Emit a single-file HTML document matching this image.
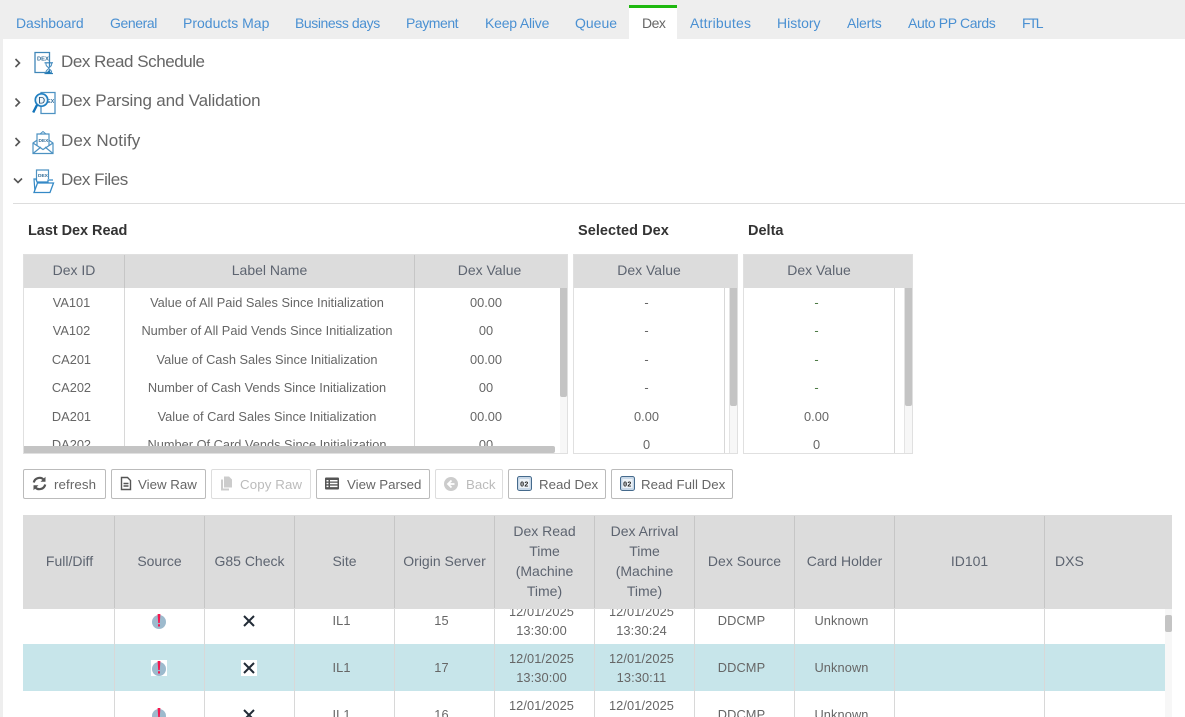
<!DOCTYPE html>
<html><head><meta charset="utf-8"><title>Dex</title>
<style>
html,body{margin:0;padding:0;background:#fff}
body{width:1185px;height:717px;position:relative;overflow:hidden;font-family:"Liberation Sans",sans-serif;color:#666}
.a{position:absolute}
.t{position:absolute;white-space:nowrap}
.tab{position:absolute;top:14px;line-height:18px;font-size:14px;color:#4a90d2;white-space:nowrap}
.sec{position:absolute;left:61px;font-size:17px;line-height:22px;color:#666;white-space:nowrap}
.h3{position:absolute;top:222px;font-size:14.5px;line-height:18px;font-weight:bold;color:#333;white-space:nowrap}
.hd{position:absolute;text-align:center;font-size:14px;line-height:20px;color:#5d6470}
.c{position:absolute;text-align:center;font-size:12.8px;line-height:16px;color:#666;white-space:nowrap}
.v{position:absolute;background:#d8d8d8;width:1px}
.vh{position:absolute;background:#c6c6c6;width:1px}
.btn{position:absolute;top:469px;height:28px;border:1px solid #bbb;border-radius:2px;background:#fff;font-size:13.3px;line-height:30px;color:#666;white-space:nowrap;box-sizing:content-box}
.btn.dis{border-color:#ddd;color:#bbb}
.btn span{position:absolute;top:0}
.btn svg{position:absolute}
.m{position:absolute;text-align:center;font-size:12.8px;line-height:19px;color:#666;white-space:nowrap;letter-spacing:.1px}
</style></head><body>

<!-- chrome -->
<div class="a" style="left:0;top:0;width:1185px;height:39px;background:#eee"></div>
<div class="a" style="left:0;top:39px;width:3px;height:678px;background:#eee"></div>
<div class="a" style="left:629px;top:5px;width:48px;height:34px;background:#fff"></div>
<div class="a" style="left:629px;top:5px;width:48px;height:3px;background:#1eb80f"></div>

<div class="tab" style="left:16px;letter-spacing:-.1px">Dashboard</div>
<div class="tab" style="left:110px;letter-spacing:-.4px">General</div>
<div class="tab" style="left:183px">Products Map</div>
<div class="tab" style="left:295px;letter-spacing:-.42px">Business days</div>
<div class="tab" style="left:406px;letter-spacing:-.45px">Payment</div>
<div class="tab" style="left:485px;letter-spacing:-.2px">Keep Alive</div>
<div class="tab" style="left:575px">Queue</div>
<div class="tab" style="left:642px;color:#666;letter-spacing:-.5px">Dex</div>
<div class="tab" style="left:690px;letter-spacing:.2px">Attributes</div>
<div class="tab" style="left:777px">History</div>
<div class="tab" style="left:847px;letter-spacing:-.2px">Alerts</div>
<div class="tab" style="left:908px;letter-spacing:-.38px">Auto PP Cards</div>
<div class="tab" style="left:1022px;letter-spacing:-1.7px">FTL</div>

<!-- accordion -->
<svg class="a" style="left:0;top:40px" width="60" height="165" viewBox="0 40 60 165" fill="none">
<g stroke="#555" stroke-width="1.6">
<path d="M15.5 59l4 4-4 4"/>
<path d="M15.5 98.500l4 4-4 4"/>
<path d="M15.500 138l4 4-4 4"/>
<path d="M14 178.500l4 4 4-4"/>
</g>
<!-- schedule -->
<path d="M35 52.500h14.500v20H35z" stroke="#3f86b8" stroke-width="1.300" fill="#fff"/>
<text x="37" y="60.500" font-family="Liberation Sans" font-size="5.800" font-weight="bold" fill="#2f6a96">DEX</text>
<path d="M44.500 62.800h8.500M44.500 73.600h8.500" stroke="#2f7fb8" stroke-width="1.100"/>
<path d="M46 63v1.500c0 2 2.800 2.800 2.800 3.700s-2.800 1.800-2.800 3.800v1.500M51.600 63v1.500c0 2-2.800 2.800-2.800 3.700s2.800 1.800 2.800 3.800v1.500" stroke="#4a8fc0" fill="#fff"/>
<path d="M45.500 73.800l3.300-3.600 3.300 3.600z" fill="#1f78b4"/>
<!-- parsing -->
<path d="M41 92.500h14v21H41z" stroke="#4d92c2" stroke-width="1.300" fill="#fff"/>
<text x="47" y="103" font-family="Liberation Sans" font-size="5.500" font-weight="bold" fill="#356f9c">EX</text>
<circle cx="41.500" cy="100" r="6.200" stroke="#1f7fc2" stroke-width="1.700" fill="#eef6fb"/>
<text x="38.200" y="103.500" font-family="Liberation Sans" font-size="9.500" fill="#1f4f78">D</text>
<path d="M37 105l-3.800 7.500" stroke="#1273b9" stroke-width="2.400"/>
<!-- notify -->
<path d="M33 143l10-7 10 7v10.500H33z" stroke="#4d92c2" stroke-width="1.200" fill="#fff"/>
<path d="M37 146v-12h12v12" stroke="#4d92c2" stroke-width="1.200" fill="#fff"/>
<path d="M40 134l3-2.500 3 2.500" stroke="#4d92c2"/>
<text x="38.500" y="142" font-family="Liberation Sans" font-size="4.800" font-weight="bold" fill="#2f6a96">DEX</text>
<path d="M33 143l10 6.500 10-6.500M33 153.500l8-6.500M53 153.500l-8-6.500" stroke="#4d92c2" stroke-width="1.200"/>
<!-- files -->
<path d="M36.500 181v-11h12v9" stroke="#4d92c2" stroke-width="1.200"/>
<text x="38" y="177" font-family="Liberation Sans" font-size="4.800" font-weight="bold" fill="#2f6a96">DEX</text>
<path d="M35 192l-1-13h2l1 3h11v-2h5" stroke="#3489c6" stroke-width="1.200"/>
<path d="M34 192.500l3.500-9.500h16l-3.500 9.500z" stroke="#3489c6" stroke-width="1.300" fill="#fff"/>
</svg>
<div class="sec" style="top:51px;letter-spacing:-.45px">Dex Read Schedule</div>
<div class="sec" style="top:90px;letter-spacing:-.17px">Dex Parsing and Validation</div>
<div class="sec" style="top:130px;letter-spacing:.1px">Dex Notify</div>
<div class="sec" style="top:169px;letter-spacing:-.45px">Dex Files</div>
<div class="a" style="left:13px;top:203px;width:1172px;height:1px;background:#ddd"></div>

<div class="h3" style="left:28px;letter-spacing:-.05px">Last Dex Read</div>
<div class="h3" style="left:578px;letter-spacing:.05px">Selected Dex</div>
<div class="h3" style="left:748px">Delta</div>

<!-- Table 1 -->
<div class="a" style="left:23px;top:254px;width:543px;height:198px;border:1px solid #e0e0e0;overflow:hidden">
  <div class="a" style="left:0;top:0;width:544px;height:33px;background:#dcdcdc"></div>
  <div class="vh" style="left:100px;top:0;height:33px"></div>
  <div class="vh" style="left:390px;top:0;height:33px"></div>
  <div class="v" style="left:100px;top:33px;height:166px"></div>
  <div class="v" style="left:390px;top:33px;height:166px"></div>
  <div class="hd" style="left:0;top:5px;width:100px">Dex ID</div>
  <div class="hd" style="left:101px;top:5px;width:289px">Label Name</div>
  <div class="hd" style="left:391px;top:5px;width:149px">Dex Value</div>
  <div class="a" style="left:536px;top:33px;width:8px;height:166px;background:#f7f7f7"></div>
  <div class="a" style="left:536px;top:33px;width:7px;height:109px;background:#c4c4c4;border-radius:0 0 2px 2px"></div>

  <div class="c" style="left:0;top:40px;width:95px">VA101</div><div class="c" style="left:101px;top:40px;width:284px">Value of All Paid Sales Since Initialization</div><div class="c" style="left:391px;top:40px;width:142px">00.00</div>
  <div class="c" style="left:0;top:68px;width:95px">VA102</div><div class="c" style="left:101px;top:68px;width:284px">Number of All Paid Vends Since Initialization</div><div class="c" style="left:391px;top:68px;width:142px">00</div>
  <div class="c" style="left:0;top:97px;width:95px">CA201</div><div class="c" style="left:101px;top:97px;width:284px">Value of Cash Sales Since Initialization</div><div class="c" style="left:391px;top:97px;width:142px">00.00</div>
  <div class="c" style="left:0;top:125px;width:95px">CA202</div><div class="c" style="left:101px;top:125px;width:284px">Number of Cash Vends Since Initialization</div><div class="c" style="left:391px;top:125px;width:142px">00</div>
  <div class="c" style="left:0;top:154px;width:95px">DA201</div><div class="c" style="left:101px;top:154px;width:284px">Value of Card Sales Since Initialization</div><div class="c" style="left:391px;top:154px;width:142px">00.00</div>
  <div class="c" style="left:0;top:182px;width:95px">DA202</div><div class="c" style="left:101px;top:182px;width:284px">Number Of Card Vends Since Initialization</div><div class="c" style="left:391px;top:182px;width:142px">00</div>

  <div class="a" style="left:0;top:191px;width:536px;height:8px;background:#fff"></div>
  <div class="a" style="left:0;top:191px;width:531px;height:7px;background:#c4c4c4;border-radius:0 2px 2px 0"></div>
</div>

<!-- Table 2 -->
<div class="a" style="left:573px;top:254px;width:163px;height:198px;border:1px solid #e0e0e0;overflow:hidden">
  <div class="a" style="left:0;top:0;width:164px;height:33px;background:#dcdcdc"></div>
  <div class="hd" style="left:0;top:5px;width:150px">Dex Value</div>
  <div class="v" style="left:150px;top:33px;height:166px"></div>
  <div class="a" style="left:155px;top:33px;width:1px;height:166px;background:#e4e4e4"></div>
  <div class="a" style="left:156px;top:33px;width:8px;height:166px;background:#f7f7f7"></div>
  <div class="a" style="left:156px;top:33px;width:7px;height:118px;background:#c4c4c4;border-radius:0 0 2px 2px"></div>
  <div class="c" style="left:0;top:40px;width:145px">-</div>
  <div class="c" style="left:0;top:68px;width:145px">-</div>
  <div class="c" style="left:0;top:97px;width:145px">-</div>
  <div class="c" style="left:0;top:125px;width:145px">-</div>
  <div class="c" style="left:0;top:154px;width:145px">0.00</div>
  <div class="c" style="left:0;top:182px;width:145px">0</div>
</div>

<!-- Table 3 -->
<div class="a" style="left:743px;top:254px;width:168px;height:198px;border:1px solid #e0e0e0;overflow:hidden">
  <div class="a" style="left:0;top:0;width:169px;height:33px;background:#dcdcdc"></div>
  <div class="hd" style="left:0;top:5px;width:150px">Dex Value</div>
  <div class="v" style="left:150px;top:33px;height:166px"></div>
  <div class="a" style="left:160px;top:33px;width:1px;height:166px;background:#e4e4e4"></div>
  <div class="a" style="left:161px;top:33px;width:8px;height:166px;background:#f7f7f7"></div>
  <div class="a" style="left:161px;top:33px;width:7px;height:118px;background:#c4c4c4;border-radius:0 0 2px 2px"></div>
  <div class="c" style="left:0;top:40px;width:145px;color:#4d7a45">-</div>
  <div class="c" style="left:0;top:68px;width:145px;color:#4d7a45">-</div>
  <div class="c" style="left:0;top:97px;width:145px;color:#4d7a45">-</div>
  <div class="c" style="left:0;top:125px;width:145px;color:#4d7a45">-</div>
  <div class="c" style="left:0;top:154px;width:145px">0.00</div>
  <div class="c" style="left:0;top:182px;width:145px">0</div>
</div>

<!-- Buttons -->
<div class="btn" style="left:23px;width:81px">
  <svg style="left:8px;top:6px" width="15" height="15" viewBox="0 0 15 15" fill="none" stroke="#555" stroke-width="2.200"><path d="M1.800 6.500A5.800 5.800 0 0 1 12 4M13.200 8.500A5.800 5.800 0 0 1 3 11"/><path d="M13.500 .8v5h-5z" fill="#555" stroke="none"/><path d="M1.500 14.200v-5h5z" fill="#555" stroke="none"/></svg>
  <span style="left:30px;letter-spacing:.1px">refresh</span></div>
<div class="btn" style="left:111px;width:93px">
  <svg style="left:8px;top:6px" width="12" height="15" viewBox="0 0 12 14" fill="none" stroke="#555" stroke-width="1.400"><path d="M1.500 1h6l3 3v9h-9zM3.500 7h5M3.500 9.500h5"/></svg>
  <span style="left:26px">View Raw</span></div>
<div class="btn dis" style="left:211px;width:98px">
  <svg style="left:8px;top:6px" width="13" height="15" viewBox="0 0 13 14" fill="#ccc"><path d="M4 0h5l3 3v8H4z"/><path d="M1 3h2v9h6v2H1z"/></svg>
  <span style="left:28px;letter-spacing:.1px">Copy Raw</span></div>
<div class="btn" style="left:316px;width:112px">
  <svg style="left:8px;top:7px" width="14" height="13" viewBox="0 0 14 13"><path d="M0 1.500A1 1 0 0 1 1 .5h12a1 1 0 0 1 1 1v10a1 1 0 0 1-1 1H1a1 1 0 0 1-1-1z" fill="#555"/><path d="M1.500 3h2v1.500h-2zM5 3h7.500v1.500H5zM1.500 5.800h2v1.500h-2zM5 5.800h7.500v1.500H5zM1.500 8.600h2v1.500h-2zM5 8.600h7.500v1.500H5z" fill="#fff"/></svg>
  <span style="left:30px">View Parsed</span></div>
<div class="btn dis" style="left:435px;width:66px">
  <svg style="left:8px;top:7px" width="14" height="14" viewBox="0 0 14 14"><circle cx="7" cy="7" r="7" fill="#ccc"/><path d="M7.500 3.500L4 7l3.500 3.500M4.500 7h6" stroke="#fff" stroke-width="1.800" fill="none"/></svg>
  <span style="left:30px">Back</span></div>
<div class="btn" style="left:508px;width:96px">
  <svg style="left:8px;top:6px" width="15" height="15" viewBox="0 0 15 15"><rect x=".5" y=".5" width="14" height="14" rx="2" fill="#c8d8e8" stroke="#456a8c"/><rect x="2.500" y="3" width="10" height="9" fill="#eef3f7"/><text x="3" y="10.500" font-family="Liberation Mono" font-size="7" font-weight="bold" fill="#222">02</text></svg>
  <span style="left:30px">Read Dex</span></div>
<div class="btn" style="left:611px;width:120px">
  <svg style="left:8px;top:6px" width="15" height="15" viewBox="0 0 15 15"><rect x=".5" y=".5" width="14" height="14" rx="2" fill="#c8d8e8" stroke="#456a8c"/><rect x="2.500" y="3" width="10" height="9" fill="#eef3f7"/><text x="3" y="10.500" font-family="Liberation Mono" font-size="7" font-weight="bold" fill="#222">02</text></svg>
  <span style="left:29px">Read Full Dex</span></div>

<!-- Bottom table -->
<div class="a" style="left:23px;top:515px;width:1149px;height:202px;overflow:hidden">
  <!-- rows -->
  <div class="a" style="left:0;top:129px;width:1142px;height:47px;background:#c7e5ea"></div>

  <div class="v" style="left:91px;top:94px;height:108px"></div>
  <div class="v" style="left:181px;top:94px;height:108px"></div>
  <div class="v" style="left:271px;top:94px;height:108px"></div>
  <div class="v" style="left:371px;top:94px;height:108px"></div>
  <div class="v" style="left:471px;top:94px;height:108px"></div>
  <div class="v" style="left:571px;top:94px;height:108px"></div>
  <div class="v" style="left:671px;top:94px;height:108px"></div>
  <div class="v" style="left:771px;top:94px;height:108px"></div>
  <div class="v" style="left:871px;top:94px;height:108px"></div>
  <div class="v" style="left:1021px;top:94px;height:108px"></div>

  <!-- row 1 -->
  <div class="m" style="left:272px;top:96px;width:93px">IL1</div>
  <div class="m" style="left:372px;top:96px;width:93px">15</div>
  <div class="m" style="left:472px;top:87px;width:93px">12/01/2025<br>13:30:00</div>
  <div class="m" style="left:572px;top:87px;width:93px">12/01/2025<br>13:30:24</div>
  <div class="m" style="left:672px;top:96px;width:93px">DDCMP</div>
  <div class="m" style="left:772px;top:96px;width:93px">Unknown</div>
  <!-- row 2 -->
  <div class="m" style="left:272px;top:143px;width:93px">IL1</div>
  <div class="m" style="left:372px;top:143px;width:93px">17</div>
  <div class="m" style="left:472px;top:134px;width:93px">12/01/2025<br>13:30:00</div>
  <div class="m" style="left:572px;top:134px;width:93px">12/01/2025<br>13:30:11</div>
  <div class="m" style="left:672px;top:143px;width:93px">DDCMP</div>
  <div class="m" style="left:772px;top:143px;width:93px">Unknown</div>
  <!-- row 3 -->
  <div class="m" style="left:272px;top:190px;width:93px">IL1</div>
  <div class="m" style="left:372px;top:190px;width:93px">16</div>
  <div class="m" style="left:472px;top:181px;width:93px">12/01/2025<br>13:30:00</div>
  <div class="m" style="left:572px;top:181px;width:93px">12/01/2025<br>13:30:10</div>
  <div class="m" style="left:672px;top:190px;width:93px">DDCMP</div>
  <div class="m" style="left:772px;top:190px;width:93px">Unknown</div>

  <!-- icons -->
  <svg class="a" style="left:128px;top:98px" width="16" height="16" viewBox="0 0 16 16"><circle cx="8" cy="9" r="7" fill="#9dbacd"/><path d="M6.600 1h2.800L8.800 10H7.200zM7 11.300h2v2.200H7z" fill="#f5174f"/></svg>
  <div class="a" style="left:128px;top:145px;width:16px;height:16px;background:#fff"></div>
  <svg class="a" style="left:128px;top:145px" width="16" height="16" viewBox="0 0 16 16"><circle cx="8" cy="9" r="7" fill="#9dbacd"/><path d="M6.600 1h2.800L8.800 10H7.200zM7 11.300h2v2.200H7z" fill="#f5174f"/></svg>
  <svg class="a" style="left:128px;top:192px" width="16" height="16" viewBox="0 0 16 16"><circle cx="8" cy="9" r="7" fill="#9dbacd"/><path d="M6.600 1h2.800L8.800 10H7.200zM7 11.300h2v2.200H7z" fill="#f5174f"/></svg>

  <svg class="a" style="left:218px;top:98px" width="16" height="16" viewBox="0 0 16 16"><path d="M3 3l10 10M13 3L3 13" stroke="#222b36" stroke-width="2"/></svg>
  <div class="a" style="left:218px;top:145px;width:16px;height:16px;background:#fff"></div>
  <svg class="a" style="left:218px;top:145px" width="16" height="16" viewBox="0 0 16 16"><path d="M3 3l10 10M13 3L3 13" stroke="#222b36" stroke-width="2"/></svg>
  <svg class="a" style="left:218px;top:192px" width="16" height="16" viewBox="0 0 16 16"><path d="M3 3l10 10M13 3L3 13" stroke="#222b36" stroke-width="2"/></svg>

  <!-- header -->
  <div class="a" style="left:0;top:0;width:1149px;height:94px;background:#dcdcdc"></div>
  <div class="vh" style="left:91px;top:1px;height:92px"></div>
  <div class="vh" style="left:181px;top:1px;height:92px"></div>
  <div class="vh" style="left:271px;top:1px;height:92px"></div>
  <div class="vh" style="left:371px;top:1px;height:92px"></div>
  <div class="vh" style="left:471px;top:1px;height:92px"></div>
  <div class="vh" style="left:571px;top:1px;height:92px"></div>
  <div class="vh" style="left:671px;top:1px;height:92px"></div>
  <div class="vh" style="left:771px;top:1px;height:92px"></div>
  <div class="vh" style="left:871px;top:1px;height:92px"></div>
  <div class="vh" style="left:1021px;top:1px;height:92px"></div>
  <div class="hd" style="left:1px;top:36px;width:91px">Full/Diff</div>
  <div class="hd" style="left:92px;top:36px;width:89px">Source</div>
  <div class="hd" style="left:182px;top:36px;width:89px">G85 Check</div>
  <div class="hd" style="left:272px;top:36px;width:99px">Site</div>
  <div class="hd" style="left:372px;top:36px;width:99px">Origin Server</div>
  <div class="hd" style="left:472px;top:6px;width:99px">Dex Read<br>Time<br>(Machine<br>Time)</div>
  <div class="hd" style="left:572px;top:6px;width:99px">Dex Arrival<br>Time<br>(Machine<br>Time)</div>
  <div class="hd" style="left:672px;top:36px;width:99px">Dex Source</div>
  <div class="hd" style="left:772px;top:36px;width:99px">Card Holder</div>
  <div class="hd" style="left:872px;top:36px;width:149px">ID101</div>
  <div class="hd" style="left:1032px;top:36px">DXS</div>

  <!-- scrollbar -->
  <div class="a" style="left:1142px;top:94px;width:7px;height:108px;background:#f7f7f7"></div>
  <div class="a" style="left:1142px;top:100px;width:7px;height:17px;background:#c4c4c4;border-radius:2px"></div>
</div>
</body></html>
